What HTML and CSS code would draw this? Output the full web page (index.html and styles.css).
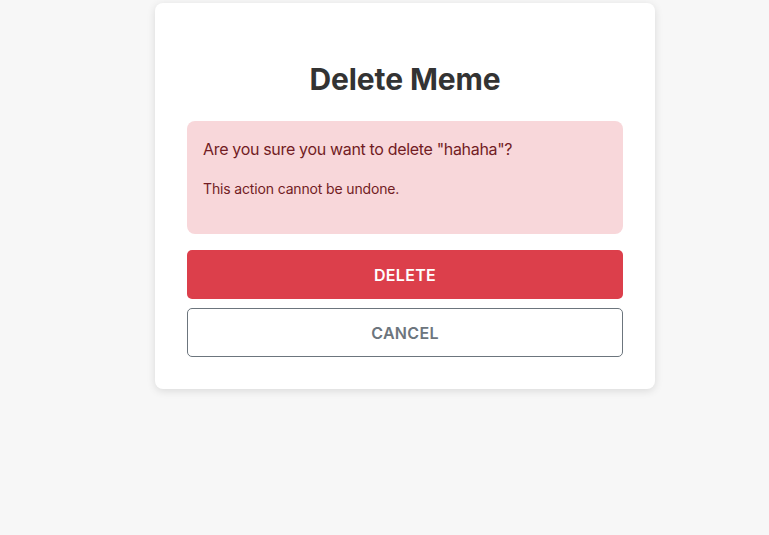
FILE: index.html
```html
<!DOCTYPE html>
<html>
<head>
<meta charset="utf-8">
<link rel="stylesheet" href="styles.css">
</head>
<body>
<div class="card">
  <h2 class="title">Delete Meme</h2>
  <div class="alert">
    <p class="alert-main">Are you sure you want to delete "hahaha"?</p>
    <p class="alert-sub">This action cannot be undone.</p>
  </div>
  <div class="actions">
    <button class="btn btn-danger">DELETE</button>
    <button class="btn btn-outline">CANCEL</button>
  </div>
</div>
</body>
</html>
```
FILE: styles.css
```css
html, body {
  margin: 0;
  padding: 0;
  background: #f7f7f7;
  font-family: Inter, "Noto Sans", sans-serif;
}
body {
  height: 535px;
}
.card {
  box-sizing: border-box;
  width: 500px;
  margin: 3px 0 0 155px;
  padding: 32px;
  background: #fff;
  border-radius: 8px;
  box-shadow: 0 2px 8px rgba(0,0,0,0.12);
}
.title {
  margin: 26px 0 24px;
  text-align: center;
  font-size: 30px;
  line-height: 36px;
  font-weight: 700;
  letter-spacing: -0.1px;
  color: #333;
}
.alert {
  background: #f8d7da;
  color: #721c24;
  border-radius: 8px;
  padding: 16px 16px 19px;
}
.alert-main {
  margin: 0 0 17px;
  font-size: 16px;
  line-height: 24px;
  letter-spacing: -0.33px;
}
.alert-sub {
  margin: 0 0 16px;
  font-size: 14px;
  line-height: 21px;
  letter-spacing: -0.15px;
}
.actions {
  display: flex;
  flex-direction: column;
  gap: 9px;
  margin-top: 16px;
}
.btn {
  height: 49px;
  border-radius: 5px;
  font-family: Inter, "Noto Sans", sans-serif;
  font-size: 16px;
  font-weight: 600;
  letter-spacing: 0.3px;
  cursor: pointer;
}
.btn-danger {
  background: #dc3f4b;
  border: 0;
  color: #fff;
}
.btn-outline {
  background: #fff;
  border: 1px solid #6c757d;
  color: #6c757d;
}
```
